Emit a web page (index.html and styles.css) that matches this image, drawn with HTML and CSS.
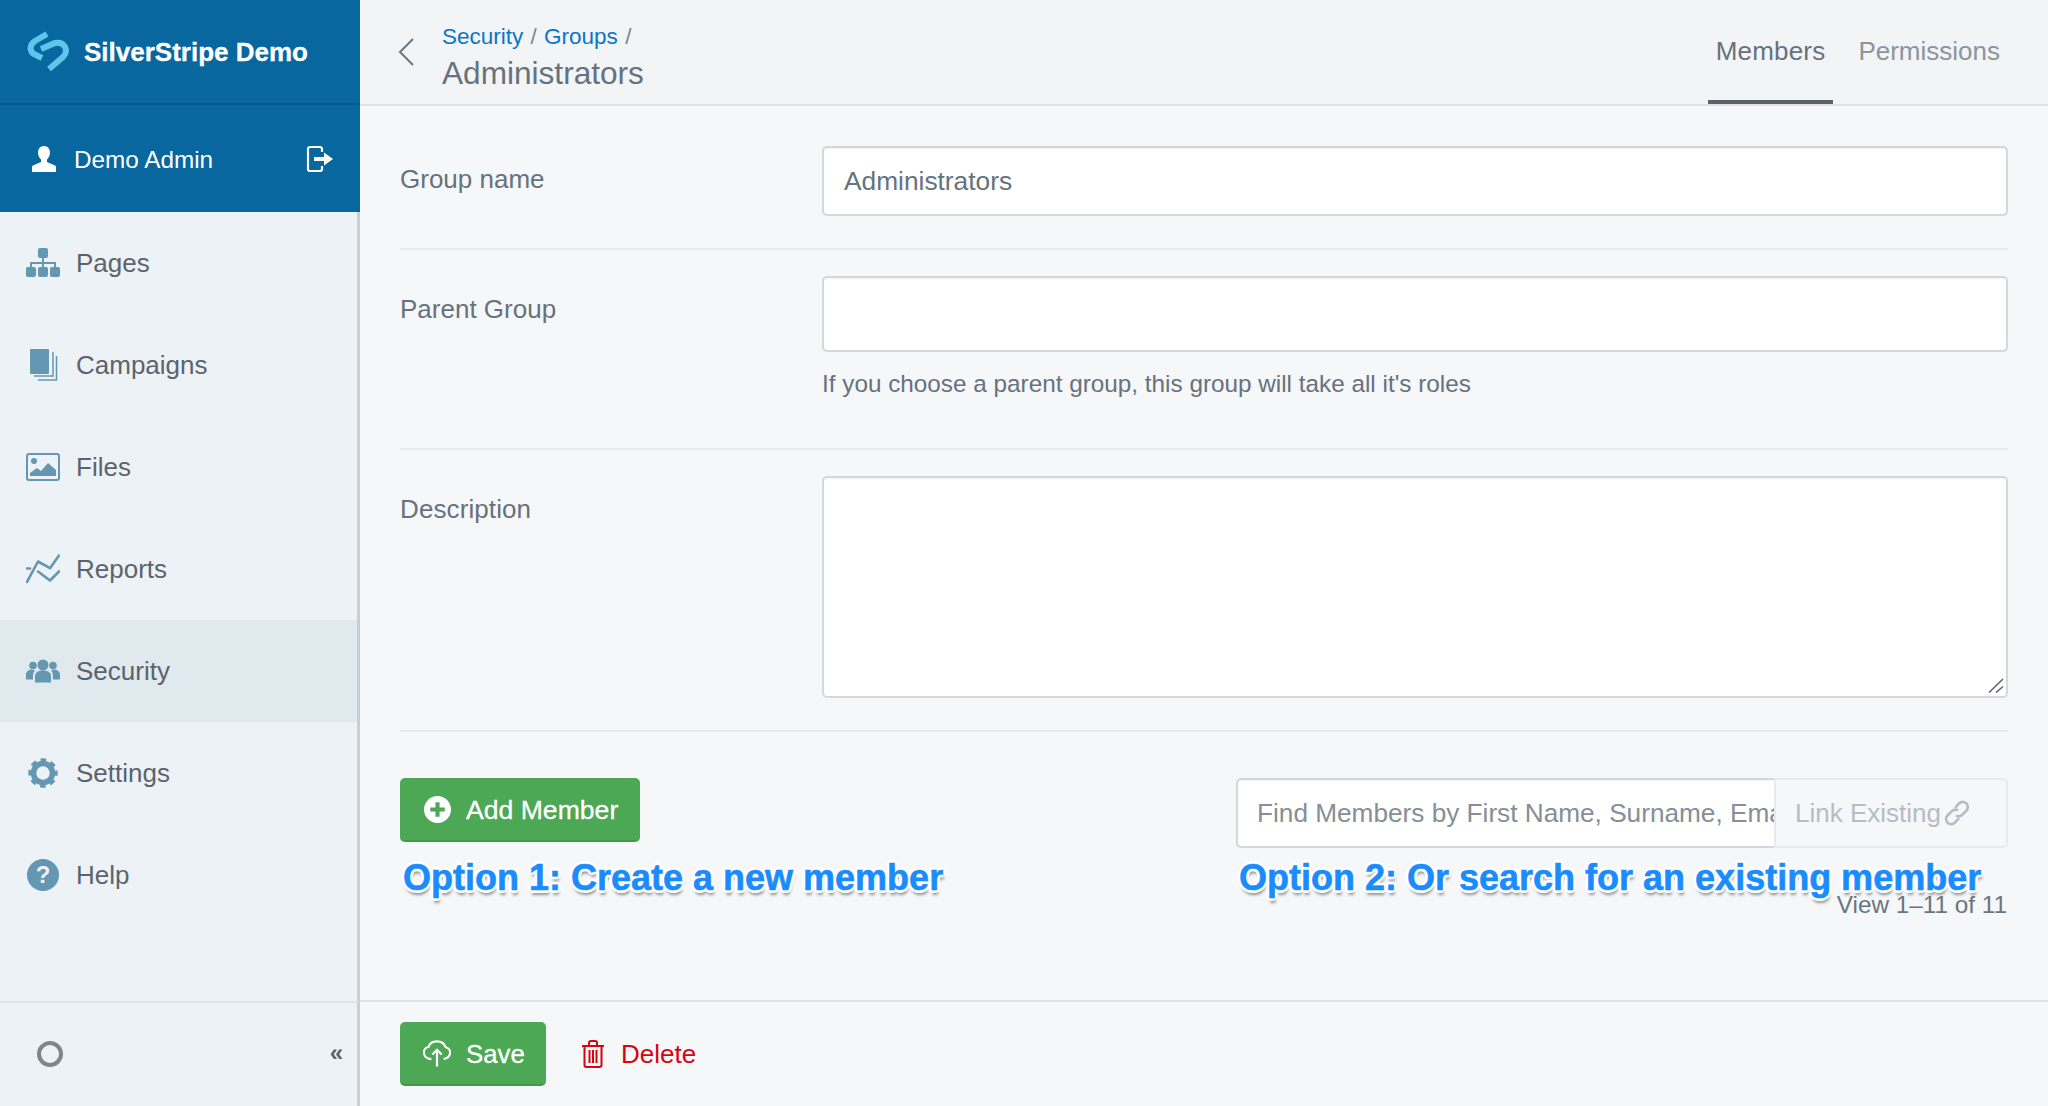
FILE: index.html
```html
<!DOCTYPE html>
<html lang="en">
<head>
<meta charset="utf-8">
<title>SilverStripe Demo</title>
<link rel="stylesheet" href="styles.css">
</head>
<body>
<div class="app">
  <aside class="sidebar">
    <div class="brand">
      <svg class="logo" viewBox="0 0 42 42"><path d="M20 3L8 10C1 15 3 22 9 24L15 27" fill="none" stroke="#5fc6ea" stroke-width="6"/><path d="M14 18L28 12C38 10 42 20 36 26L22 38" fill="none" stroke="#5fc6ea" stroke-width="6"/></svg>
      <span class="brand-name">SilverStripe Demo</span>
    </div>
    <div class="user">
      <svg class="user-icon" viewBox="0 0 24 26"><path d="M12 0c3.600 0 6 2.800 6 6.500 0 3-1.400 5.500-3 7v2.500l8 3.500c.8.400 1 1 1 2V26H0v-4.500c0-1 .2-1.600 1-2l8-3.500v-2.500c-1.600-1.500-3-4-3-7C6 2.800 8.400 0 12 0z" fill="#fff"/></svg>
      <span class="user-name">Demo Admin</span>
      <svg class="logout" viewBox="0 0 28 28"><path d="M14 2H4a2 2 0 0 0-2 2v20a2 2 0 0 0 2 2h10a2 2 0 0 0 2-2v-3M16 7V4a2 2 0 0 0-2-2" fill="none" stroke="#fff" stroke-width="2.200"/><path d="M8 12h10V7.500l9 6.500-9 6.500V16H8z" fill="#fff"/></svg>
    </div>
    <nav class="nav">
      <a class="nav-item">
        <svg class="nav-icon" viewBox="0 0 34 30"><g fill="#6497b1"><rect x="12" y="0" width="10" height="10" rx="2"/><rect x="0" y="19" width="10" height="10" rx="2"/><rect x="12" y="19" width="10" height="10" rx="2"/><rect x="24" y="19" width="10" height="10" rx="2"/><path d="M16 10h2v4h12v5h-2v-3H18v3h-2v-3H6v3H4v-5h12z"/></g></svg>
        Pages
      </a>
      <a class="nav-item">
        <svg class="nav-icon" viewBox="0 0 34 32"><g fill="none" stroke="#6497b1" stroke-width="1.500"><path d="M27 3v24H8"/><path d="M30.500 7v24H12"/></g><rect x="4" y="0" width="19" height="25" rx="1" fill="#6497b1"/></svg>
        Campaigns
      </a>
      <a class="nav-item">
        <svg class="nav-icon" viewBox="0 0 34 28"><rect x="1" y="1" width="32" height="26" rx="2" fill="none" stroke="#6497b1" stroke-width="2"/><circle cx="8" cy="8" r="3" fill="#6497b1"/><path d="M4 23v-3l7-5 4 3 7-8 8 7v6z" fill="#6497b1"/></svg>
        Files
      </a>
      <a class="nav-item">
        <svg class="nav-icon" viewBox="0 0 34 29"><g fill="none" stroke="#6497b1" stroke-width="2.600" stroke-linecap="round" stroke-linejoin="round"><path d="M1 27.500L12 7l12 6.700L33 1"/><path d="M12 17l12 9 9-9"/><path d="M1 14h3"/></g></svg>
        Reports
      </a>
      <a class="nav-item active">
        <svg class="nav-icon" viewBox="0 0 34 23"><g fill="#6497b1"><circle cx="17" cy="5.500" r="5.500"/><circle cx="7" cy="6" r="3.800"/><circle cx="27" cy="6" r="3.800"/><path d="M9 23v-6c0-4 3-6 8-6s8 2 8 6v6z"/><path d="M0 20v-5c0-3 3-5 6-5l3 1c-2 2-2 4-2 9zM34 20v-5c0-3-3-5-6-5l-3 1c2 2 2 4 2 9z"/></g></svg>
        Security
      </a>
      <a class="nav-item">
        <svg class="nav-icon" viewBox="0 0 34 34"><g fill="none" stroke="#6497b1"><circle cx="17" cy="17" r="9.500" stroke-width="5.500"/><circle cx="17" cy="17" r="13" stroke-width="3.400" stroke-dasharray="5.600 4.610" stroke-dashoffset="2.800"/></g></svg>
        Settings
      </a>
      <a class="nav-item">
        <svg class="nav-icon" viewBox="0 0 34 34"><circle cx="17" cy="17" r="16" fill="#6497b1"/><text class="help-mark" x="17" y="25" text-anchor="middle">?</text></svg>
        Help
      </a>
    </nav>
    <div class="side-foot">
      <span class="spinner"></span>
      <span class="collapse">«</span>
    </div>
  </aside>

  <main class="main">
    <header class="topbar">
      <svg class="back" viewBox="0 0 16 28"><path d="M15 1L2 14l13 13" fill="none" stroke="#6b7680" stroke-width="2"/></svg>
      <div class="crumbs">
        <div class="crumb-line"><a>Security</a> <span class="sep">/</span> <a>Groups</a> <span class="sep">/</span></div>
        <div class="page-title">Administrators</div>
      </div>
      <div class="tabs">
        <a class="tab current">Members</a>
        <a class="tab">Permissions</a>
      </div>
    </header>

    <section class="content">
      <div class="field first">
        <label class="label">Group name</label>
        <div class="control"><div class="input name-input">Administrators</div></div>
      </div>
      <div class="field second">
        <label class="label">Parent Group</label>
        <div class="control">
          <div class="input parent-input"></div>
          <p class="help">If you choose a parent group, this group will take all it's roles</p>
        </div>
      </div>
      <div class="field third">
        <label class="label">Description</label>
        <div class="control">
          <div class="input desc-input">
            <svg class="grip" viewBox="0 0 16 15"><path d="M15 1L1 14.500M15 8.500L8 14.500" stroke="#666" stroke-width="1.600" fill="none"/></svg>
          </div>
        </div>
      </div>

      <div class="members">
        <div class="option-one">
          <a class="btn add">
            <svg class="btn-icon" viewBox="0 0 26 26"><circle cx="13" cy="13" r="13" fill="#fff"/><path d="M11 6h4v5h5v4h-5v5h-4v-5H6v-4h5z" fill="#4ca854"/></svg>
            <span class="btn-label">Add Member</span>
          </a>
          <div class="callout first-call">Option 1: Create a new member</div>
        </div>
        <div class="option-two">
          <div class="search">
            <div class="search-box"><span class="placeholder">Find Members by First Name, Surname, Email</span></div>
            <div class="link-existing">Link Existing
              <svg class="link-icon" viewBox="0 0 26 26"><g fill="none" stroke="#b6bcc4" stroke-width="2.600"><path d="M11 8l4-4.500a5 5 0 0 1 7.500 7L18 15a5 5 0 0 1-6 .5"/><path d="M15 18l-4 4.500a5 5 0 0 1-7.500-7L8 11a5 5 0 0 1 6-.5"/></g></svg>
            </div>
          </div>
          <div class="callout second-call">Option 2: Or search for an existing member</div>
          <div class="count">View 1–11 of 11</div>
        </div>
      </div>
    </section>

    <footer class="actions">
      <a class="btn save">
        <svg class="save-icon" viewBox="0 0 30 28"><path d="M9 20C3 20 1 16 1 12.500 1 9 4 7 6 7 7 3 11 1 15 1c5 0 8 3 9 6 3 1 5 3 5 6 0 3-2 6-7 7" fill="none" stroke="#fff" stroke-width="2.200"/><path d="M15 28V10M10 15l5-5 5 5" fill="none" stroke="#fff" stroke-width="2.400"/></svg>
        <span class="btn-label">Save</span>
      </a>
      <a class="delete">
        <svg class="trash" viewBox="0 0 24 28"><g fill="none" stroke="#d40511" stroke-width="2"><path d="M1 6h22M8 6V3a2 2 0 0 1 2-2h4a2 2 0 0 1 2 2v3"/><path d="M3.500 6v19a2 2 0 0 0 2 2h13a2 2 0 0 0 2-2V6"/><path d="M8.500 10v13M12 10v13M15.500 10v13"/></g></svg>
        Delete
      </a>
    </footer>
  </main>
</div>
</body>
</html>
```
FILE: styles.css
```css
* { box-sizing: border-box; }
html, body { margin: 0; padding: 0; height: 100%; }
body {
  font-family: "Liberation Sans", Arial, sans-serif;
  font-size: 26px;
  color: #66727d;
  background: #f6f7f9;
  overflow: hidden;
}
.app { display: flex; height: 1106px; width: 2048px; }

.sidebar {
  width: 360px;
  flex: none;
  display: flex;
  flex-direction: column;
  background: #edf2f6;
  border-right: 3px solid #c6ced6;
}
.brand {
  height: 105px;
  margin-right: -3px;
  display: flex;
  align-items: center;
  padding: 0 0 0 27px;
  background: #07679e;
  border-bottom: 2px solid #055a8b;
}
.logo { width: 42px; height: 42px; flex: none; }
.brand-name {
  margin-left: 15px;
  margin-top: 2px;
  font-size: 26px;
  font-weight: 700;
  color: #fff;
  -webkit-text-stroke: .3px #fff;
}
.user {
  height: 107px;
  margin-right: -3px;
  display: flex;
  align-items: center;
  padding: 0 26px 0 32px;
  background: #07679e;
  color: #fff;
}
.user-icon { width: 24px; height: 26px; flex: none; }
.user-name { margin-left: 18px; margin-top: 3px; flex: 1; font-size: 24.300px; }
.logout { width: 28px; height: 28px; flex: none; }

.nav { flex: 1; display: flex; flex-direction: column; }
.nav-item {
  height: 102px;
  display: flex;
  align-items: center;
  padding-left: 26px;
  color: #5b646d;
}
.nav-item.active { background: #dfe9ee; }
.nav-icon { width: 34px; height: 34px; flex: none; margin-right: 16px; }
.help-mark { font-size: 24px; font-weight: 700; fill: #edf2f6; font-family: "Liberation Sans", sans-serif; }

.side-foot {
  height: 105px;
  margin-right: -3px;
  border-top: 2px solid #dfe3e9;
  border-right: 3px solid #c6ced6;
  display: flex;
  align-items: center;
  justify-content: space-between;
  padding: 0 14px 2px 37px;
}
.spinner {
  width: 26px;
  height: 26px;
  border: 4px solid #7d868d;
  border-radius: 50%;
}
.collapse { font-size: 24px; font-weight: 700; color: #5b646d; margin-top: -2px; }

.main { flex: 1; display: flex; flex-direction: column; min-width: 0; }
.topbar {
  height: 106px;
  flex: none;
  display: flex;
  background: #f3f4f6;
  border-bottom: 2px solid #dfe3e9;
  padding: 0 40px;
}
.back { width: 16px; height: 28px; margin: 38px 0 0 -2px; flex: none; }
.crumbs { margin-left: 28px; padding-top: 22px; flex: 1; }
.crumb-line { font-size: 22.500px; line-height: 30px; color: #7d868d; }
.crumb-line a { color: #0b76c5; }
.sep { margin: 0 1px; }
.page-title { font-size: 31.600px; line-height: 42px; color: #66727d; }
.tabs { display: flex; gap: 17px; }
.tab {
  height: 104px;
  padding: 36px 8px 0;
  line-height: 30px;
  color: #8b959e;
}
.tab.current {
  color: #66727d;
  letter-spacing: .2px;
  border-bottom: 4px solid #5b646d;
}

.content { flex: 1; padding: 0 40px; position: relative; }
.field {
  display: flex;
  border-bottom: 2px solid #e6e9ed;
}
.first { padding-top: 40px; height: 144px; }
.second { padding-top: 26px; height: 200px; }
.third { padding-top: 26px; height: 282px; }
.label { width: 422px; flex: none; padding-top: 18px; line-height: 30px; }
.second .label { padding-top: 18px; }
.third .label { padding-top: 18px; letter-spacing: .1px; }
.control { flex: 1; }
.input {
  position: relative;
  background: #fff;
  border: 2px solid #d3d8de;
  border-radius: 5px;
  padding: 0 20px;
  font-size: 26.300px;
  box-shadow: inset 0 1px 2px rgba(0, 0, 0, .05);
}
.name-input { height: 70px; line-height: 67px; }
.parent-input { height: 76px; }
.desc-input { height: 222px; }
.grip { position: absolute; right: 2px; bottom: 3px; width: 16px; height: 15px; }
.help { margin: 17px 0 0; font-size: 24.300px; line-height: 30px; }

.members { display: flex; justify-content: space-between; padding-top: 46px; }
.option-one { width: 560px; }
.btn {
  display: inline-flex;
  align-items: center;
  background: #4ca854;
  border-bottom: 2px solid #43994b;
  border-radius: 5px;
  color: #fff;
}
.btn-label { -webkit-text-stroke: .3px #fff; padding-top: 2px; }
.add { height: 64px; width: 240px; padding-left: 24px; }
.add .btn-label { font-size: 26.600px; }
.btn-icon { width: 27px; height: 27px; margin-right: 15px; flex: none; }
.callout {
  font-size: 36px;
  font-weight: 700;
  line-height: 44px;
  color: #1a8cff;
  -webkit-text-stroke: .6px #1a8cff;
  text-shadow: 3px 0 0 #fff, -3px 0 0 #fff, 0 3px 0 #fff, 0 -3px 0 #fff, 2px 2px 0 #fff, -2px 2px 0 #fff, 2px -2px 0 #fff, -2px -2px 0 #fff, 1px 5px 3px #8f959b;
  white-space: nowrap;
}
.first-call { margin-top: 14px; padding-left: 3px; }
.option-two { width: 772px; position: relative; }
.search { display: flex; height: 70px; }
.search-box {
  width: 538px;
  overflow: hidden;
  white-space: nowrap;
  background: #fff;
  border: 2px solid #d3d8de;
  border-right: 0;
  border-radius: 5px 0 0 5px;
  padding: 0 0 0 19px;
  line-height: 66px;
  box-shadow: inset 0 1px 2px rgba(0, 0, 0, .05);
}
.placeholder { color: #868e97; font-size: 26.200px; }
.link-existing {
  flex: 1;
  display: flex;
  align-items: center;
  padding-left: 19px;
  color: #b6bcc4;
  border: 2px solid #e6e9ed;
  border-radius: 0 5px 5px 0;
}
.link-icon { width: 26px; height: 26px; margin-left: 3px; }
.second-call { margin-top: 8px; padding-left: 3px; }
.count {
  text-align: right;
  font-size: 24.300px;
  line-height: 28px;
  margin-top: -9px;
  padding-right: 1px;
  color: #6b757f;
}

.actions {
  height: 106px;
  flex: none;
  display: flex;
  align-items: center;
  border-top: 2px solid #dfe3e9;
  padding: 0 40px;
}
.save { height: 64px; width: 146px; padding-left: 23px; }
.save .btn-label { font-size: 25.800px; }
.save-icon { width: 28px; height: 27px; margin-right: 15px; flex: none; }
.delete { display: flex; align-items: center; margin-left: 35px; color: #d40511; }
.trash { width: 24px; height: 28px; margin-right: 16px; }
```
